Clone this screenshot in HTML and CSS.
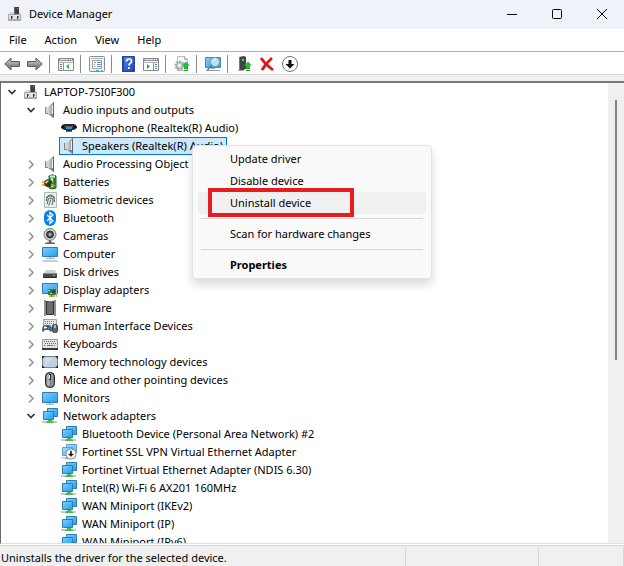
FILE: index.html
```html
<!DOCTYPE html>
<html lang="en">
<head>
<meta charset="utf-8">
<title>Device Manager</title>
<link rel="stylesheet" href="styles.css">
</head>
<body>
<svg class="defs" aria-hidden="true">
  <defs>
    <linearGradient id="g-screen" x1="0" y1="0" x2="1" y2="1"><stop offset="0" stop-color="#7fd0fb"/><stop offset="1" stop-color="#1e9df2"/></linearGradient>
    <linearGradient id="g-cone" x1="0" y1="0" x2="1" y2="0"><stop offset="0" stop-color="#d4d8dc"/><stop offset="1" stop-color="#868c92"/></linearGradient>
    <linearGradient id="g-arrow" x1="0" y1="0" x2="0" y2="1"><stop offset="0" stop-color="#b4b4b4"/><stop offset="1" stop-color="#747474"/></linearGradient>
    <linearGradient id="g-help" x1="0" y1="0" x2="1" y2="1"><stop offset="0" stop-color="#5a86e8"/><stop offset="1" stop-color="#1d3fb0"/></linearGradient>
  </defs>
  <symbol id="i-pc" viewBox="0 0 16 16">
    <path d="M7 1h5v8H7z" fill="#3b3f42"/><path d="M10 2h1v1h-1z" fill="#3cf04a"/><path d="M7 1h1v8H7z" fill="#6a6e70"/>
    <path d="M2 8l1-2h4v3h5V6h1l1 2v1H2z" fill="#d9dadb"/>
    <path d="M1.500 8.500h12v6h-12z" fill="#e1e2e3" stroke="#a2a4a6"/><path d="M2 13h11v2H2z" fill="#a8aaac"/><path d="M4 10h1v3H4zM10 10h1v3h-1z" fill="#333"/><path d="M5 10h1v2H5zM11 10h1v2h-1z" fill="#888"/>
  </symbol>
  <symbol id="i-speaker" viewBox="0 0 16 16">
    <path d="M3 5h3v7H3z" fill="#81878d"/><path d="M4 5h2v6H4z" fill="#cfd6dc"/>
    <path d="M6 5l5-4.500h1v15h-1L6 12z" fill="url(#g-cone)"/>
    <path d="M6 12l5 3.500h1V12H6z" fill="#6f757b" opacity=".6"/>
    <path d="M11 .5h1v15h-1z" fill="#5f646a"/><path d="M10 3h1v9h-1z" fill="#eceef0"/>
  </symbol>
  <symbol id="i-mic" viewBox="0 0 16 16">
    <path d="M1 5l2-1h10l2 1 1 2v1l-3 2h-2v2H5v-2H3L0 8V7z" fill="#272a2e"/>
    <path d="M4 6h8v1H4z" fill="#5b6168"/><path d="M5 7h6v2H5z" fill="#1497ef"/><path d="M1 6h2v2H1zM13 6h2v2h-2z" fill="#111"/><path d="M5 11h6v1H5z" fill="#287bb8"/>
  </symbol>
  <symbol id="i-battery" viewBox="0 0 16 16">
    <path d="M7 2Q10-.5 14 2v12q-3 2-7 0z" fill="#32a53a" stroke="#176b20"/>
    <path d="M8 1.500h5v2H8z" fill="#dde8dd"/><path d="M9 4h2v9H9z" fill="#a6f0a2"/><path d="M12 4h1v10h-1z" fill="#167225"/>
    <path d="M2 7l4-2 4 2 1 3-3 3H5L2 11z" fill="#34362f"/><path d="M3 8l3-2 1 1-3 3z" fill="#e6c641"/>
    <path d="M0 8h3M0 11h3M9 10l4 2" stroke="#c79b22" stroke-width="1.500"/>
  </symbol>
  <symbol id="i-finger" viewBox="0 0 16 16">
    <path d="M2.500 .5h12v15h-12z" fill="#eaf0f0" stroke="#acbcbc"/>
    <g fill="none" stroke="#535b5b"><path d="M4 6q4.500-6 9 0M4.500 9q0-5 4-5t4 6M5 12q1-2 1-4t2.500-2 2.500 2-1 5M6.500 13.500q2-3 2-6"/></g>
  </symbol>
  <symbol id="i-bt" viewBox="0 0 16 16">
    <rect x="2" width="12" height="16" rx="6" fill="#087fee"/><path d="M5 5l6 6-3 2.500v-11L11 5l-6 6" fill="none" stroke="#fff" stroke-width="1.200"/>
  </symbol>
  <symbol id="i-camera" viewBox="0 0 16 16">
    <path d="M3 15q5-3 10 0z" fill="#8d8d8d"/><path d="M7 12h2v3H7z" fill="#555"/><circle cx="8" cy="6.500" r="6" fill="#d3d4d4" stroke="#727474"/><circle cx="8" cy="6.500" r="3.500" fill="#4b4f51" stroke="#272a2c"/><circle cx="8" cy="6.500" r="1.500" fill="#9eb5c0"/><path d="M3 15.500h10" stroke="#666"/>
  </symbol>
  <symbol id="i-computer" viewBox="0 0 16 16">
    <path d="M.5 1.500h15v9H.5z" fill="url(#g-screen)" stroke="#347ba5"/><path d="M7 11h3v2H7z" fill="#b8c2ca"/><path d="M4 12.500h9" stroke="#a5b6c4"/><path d="M1 14.500h14l1 1H0z" fill="#8f9fad"/>
  </symbol>
  <symbol id="i-disk" viewBox="0 0 16 16">
    <path d="M4 6h9l2 4H1z" fill="#cfd1d2"/><path d="M1 9h14v5H1z" fill="#45494c"/><path d="M1 9h14v1H1z" fill="#8c9092"/><path d="M11 11h2v1h-2z" fill="#4be85c"/><path d="M2 13h12v1H2z" fill="#25292b"/>
  </symbol>
  <symbol id="i-display" viewBox="0 0 16 16">
    <path d="M.5 1.500h15v10H.5z" fill="url(#g-screen)" stroke="#347ba5"/><path d="M6 7h8v6H6z" fill="#2a8247"/><path d="M6 8h2v1H6zM8 11h2v1H8z" fill="#a2d8a2"/><path d="M10 8h3v3h-3z" fill="#244d37"/><path d="M14 5h1v10h-1z" fill="#a7b0af"/><path d="M7 13h6v2H7z" fill="#efa51e"/><path d="M9 13h1v2H9z" fill="#b56b00"/>
  </symbol>
  <symbol id="i-chip" viewBox="0 0 16 16">
    <path d="M3 .5v15M13 .5v15" stroke="#222" stroke-width="2" stroke-dasharray="1 1"/><path d="M4.500 1.500h2q1.500 1.500 3 0h2v13h-7z" fill="#686e71" stroke="#2d3133"/>
  </symbol>
  <symbol id="i-hid" viewBox="0 0 16 16">
    <path d="M1.500 1.500h13v8h-13z" fill="#e4e6e8" stroke="#9da3a8"/><path d="M3 3.500h10M3 5.500h10" stroke="#777f86" stroke-dasharray="1 1"/>
    <path d="M0 13q0-6 3-6h4q3 0 3 6-1 2-3-1H3q-2 3-3 1z" fill="#4b5f70"/><path d="M3 8v3M2 9.500h3" stroke="#fff"/><path d="M7 8h1v1H7z" fill="#e33"/><path d="M6 10h1v1H6z" fill="#34b6ff"/><rect x="10.500" y="6.500" width="5" height="8" rx="2" fill="#606870" stroke="#30363c"/><path d="M13 7v3" stroke="#fff"/>
  </symbol>
  <symbol id="i-keyboard" viewBox="0 0 16 16">
    <path d="M.5 3.500h15v9H.5z" fill="#e2e5e8" stroke="#969da3"/><path d="M2 5.500h12M3 7.500h11M2 9.500h2m8 0h2" stroke="#626b73" stroke-dasharray="1 1"/><path d="M5 9.500h6" stroke="#737a80"/><path d="M0 12h16v2H0z" fill="#33383c"/>
  </symbol>
  <symbol id="i-memory" viewBox="0 0 16 16">
    <rect x=".5" y="2.500" width="15" height="11" rx="1" fill="#bdd1df" stroke="#7b868e"/><path d="M0 2h3L0 5zM16 2v3l-3-3zM0 14v-3l3 3zM16 14h-3l3-3z" fill="#22272a"/><path d="M3 4h9L3 12z" fill="#cbdce8"/>
  </symbol>
  <symbol id="i-mouse" viewBox="0 0 16 16">
    <rect x="3.500" y=".5" width="9" height="15" rx="4" fill="#757b80" stroke="#24282b"/><rect x="5" y="2" width="3" height="12" rx="1.500" fill="#aab2b8"/><rect x="9" y="2" width="2" height="12" rx="1" fill="#8e969c"/><path d="M7 2h2v6H7z" fill="#202427"/><path d="M7 3h1v4H7z" fill="#e6f2fa"/>
  </symbol>
  <symbol id="i-monitor" viewBox="0 0 16 16">
    <path d="M.5 2.500h15v10H.5z" fill="url(#g-screen)" stroke="#347ba5"/><path d="M7 13h2v1H7z" fill="#9ab"/><path d="M4 14h8v1H4z" fill="#a8b7c2"/>
  </symbol>
  <symbol id="i-net" viewBox="0 0 16 16">
    <path d="M5.500 .5h10v8h-10z" fill="url(#g-screen)" stroke="#2f7fae"/><path d="M1.500 3.500h10v8h-10z" fill="url(#g-screen)" stroke="#2f7fae"/><path d="M0 13h15v2H0z" fill="#c9cdca"/><path d="M6 12h4v1l2 1v1H4v-1l2-1z" fill="#4bb853"/>
  </symbol>
  <symbol id="i-net-off" viewBox="0 0 16 16">
    <use href="#i-net" opacity=".75"/><circle cx="10" cy="10" r="5" fill="#fff" stroke="#888"/><path d="M9.500 7h1v3h2L10 12.500 7.500 10h2z" fill="#111" stroke="#111" stroke-width=".5"/>
  </symbol>
  <symbol id="i-back" viewBox="0 0 16 16">
    <path d="M.7 8L7 2v3.500h8.500v5H7V14z" fill="url(#g-arrow)" stroke="#5f5f5f"/><path d="M3 8l3-3v2h8" fill="none" stroke="#b9b9b9"/>
  </symbol>
  <symbol id="i-pane" viewBox="0 0 16 16">
    <path d="M.5 2.500h15v12H.5z" fill="#f3f4f5" stroke="#85898c"/><path d="M1 3h14v2H1z" fill="#8b96a1"/><path d="M2 3.500h8" stroke="#d9e2e9"/><path d="M11 3h1v1h-1zM13 3h1v1h-1z" fill="#fff"/><path d="M1 6.500h14" stroke="#aab0b5"/>
  </symbol>
  <symbol id="i-tree" viewBox="0 0 16 16">
    <use href="#i-pane"/><path d="M5.500 7v8" stroke="#92979b"/><path d="M2 8.500h2m-2 2h2m-2 2h2" stroke="#69829a"/><path d="M6 7h9v7H6z" fill="#fff"/><path d="M11 8v5L8 10.500z" fill="#3caa35"/>
  </symbol>
  <symbol id="i-action" viewBox="0 0 16 16">
    <use href="#i-pane"/><path d="M10.500 7v8" stroke="#92979b"/><path d="M12 8.500h2m-2 2h2m-2 2h2" stroke="#69829a"/><path d="M1 7h9v7H1z" fill="#fff"/><path d="M4 8v5l3-2.500z" fill="#3caa35"/>
  </symbol>
  <symbol id="i-props" viewBox="0 0 16 16">
    <rect x=".5" y=".5" width="15" height="15" rx="1" fill="#f0f2f4" stroke="#888e93"/><path d="M2 2.500h12" stroke="#a6b4bf"/><path d="M3.500 4.500h9v8h-9z" fill="#fff" stroke="#9ba9b4"/><path d="M5 6.500h2m1 0h4m-7 2h1m2 0h4m-7 2h1m2 0h4" stroke="#7993a8"/><path d="M7 14h3v1H7z" fill="#27b5ea"/><path d="M12 14h2v1h-2z" fill="#aaa"/>
  </symbol>
  <symbol id="i-help" viewBox="0 0 16 16">
    <path d="M2.500 .5h12v15h-12z" fill="url(#g-help)" stroke="#234197"/><path d="M2 0h2v16H2z" fill="#24449d"/><path d="M6.500 5.500q0-2.500 2.500-2.500t2.500 2.200q0 1.500-1.500 2.300-1 .7-1 2M9 11v2" fill="none" stroke="#fff" stroke-width="1.700"/>
  </symbol>
  <symbol id="i-scan" viewBox="0 0 16 16">
    <path d="M3.500 .5h7l3 3v11h-10z" fill="#fafafa" stroke="#bdbdbd"/><path d="M10.500 .5v3h3" fill="none" stroke="#aaa"/><circle cx="5.500" cy="9.500" r="4" fill="none" stroke="#a3a8ac" stroke-width="2" stroke-dasharray="2 1"/><circle cx="5.500" cy="9.500" r="3" fill="#d3d8dc" stroke="#969ca1"/><circle cx="5.500" cy="9.500" r="1.200" fill="#fff"/><use href="#i-up"/>
  </symbol>
  <symbol id="i-up" viewBox="0 0 16 16">
    <path d="M12 5.500l4 4h-2V12h-4V9.500H8z" fill="#25bf34"/><path d="M10 12.500h4m-4 2h4" stroke="#1a9b29"/>
  </symbol>
  <symbol id="i-find" viewBox="0 0 16 16">
    <path d="M.5 1.500h15v10H.5z" fill="url(#g-screen)" stroke="#4d87a8"/><path d="M6 12h4v1H6z" fill="#9ab"/><path d="M1 14.500h14" stroke="#8ba0ae"/><circle cx="10" cy="6" r="4.500" fill="#b9e5fc" stroke="#8b9aa3"/><path d="M7 9l-4.500 5" stroke="#66767f" stroke-width="1.500"/><path d="M8 5q1-2 3-2" fill="none" stroke="#fff"/>
  </symbol>
  <symbol id="i-update" viewBox="0 0 16 16">
    <path d="M3 1l5-1 2 1v12l-3 1H3z" fill="#3f4446"/><path d="M3 1h1v13H3z" fill="#777"/><path d="M6 3h2v2H6z" fill="#43e24d"/><path d="M2 14.500h6" stroke="#aaa"/><use href="#i-up"/>
  </symbol>
  <symbol id="i-remove" viewBox="0 0 16 16">
    <path d="M2 2q4 6 12 12M13 2Q7 7 3 14" fill="none" stroke="#d9141c" stroke-width="2.800"/>
  </symbol>
  <symbol id="i-disable" viewBox="0 0 16 16">
    <circle cx="8" cy="8" r="7.500" fill="#fff" stroke="#777"/><path d="M6.500 4h3v4h3L8 12.500 3.500 8h3z" fill="#111"/>
  </symbol>
  <symbol id="i-open" viewBox="0 0 10 10"><path d="M1.500 3L5 6.500 8.500 3" fill="none" stroke="#333" stroke-width="1.700"/></symbol>
  <symbol id="i-closed" viewBox="0 0 10 10"><path d="M3 1.500L7 5.500 3 9.500" fill="none" stroke="#999" stroke-width="1.700"/></symbol>
</svg>

<div class="window">
  <header class="titlebar">
    <svg class="icon"><use href="#i-pc"/></svg>
    <h1 class="title">Device Manager</h1>
    <button class="caption" aria-label="Minimize"><svg class="glyph" viewBox="0 0 10 10"><path d="M0 5.500h10"/></svg></button>
    <button class="caption" aria-label="Maximize"><svg class="glyph" viewBox="0 0 10 10"><rect x=".5" y=".5" width="9" height="9" rx="1"/></svg></button>
    <button class="caption" aria-label="Close"><svg class="glyph" viewBox="0 0 10 10"><path d="M0 0l10 10M10 0L0 10"/></svg></button>
  </header>

  <nav class="menubar">
    <button class="menu">File</button>
    <button class="menu">Action</button>
    <button class="menu">View</button>
    <button class="menu">Help</button>
  </nav>

  <div class="toolbar" role="toolbar">
    <button class="tool" aria-label="Back"><svg class="icon"><use href="#i-back"/></svg></button>
    <button class="tool" aria-label="Forward"><svg class="icon flip"><use href="#i-back"/></svg></button>
    <span class="divider"></span>
    <button class="tool" aria-label="Show or hide console tree"><svg class="icon"><use href="#i-tree"/></svg></button>
    <span class="divider"></span>
    <button class="tool" aria-label="Properties"><svg class="icon"><use href="#i-props"/></svg></button>
    <span class="divider"></span>
    <button class="tool" aria-label="Help"><svg class="icon"><use href="#i-help"/></svg></button>
    <button class="tool" aria-label="Show or hide action pane"><svg class="icon"><use href="#i-action"/></svg></button>
    <span class="divider"></span>
    <button class="tool" aria-label="Update driver"><svg class="icon"><use href="#i-scan"/></svg></button>
    <span class="divider"></span>
    <button class="tool" aria-label="Scan for hardware changes"><svg class="icon"><use href="#i-find"/></svg></button>
    <span class="divider"></span>
    <button class="tool" aria-label="Update device"><svg class="icon"><use href="#i-update"/></svg></button>
    <button class="tool" aria-label="Uninstall device"><svg class="icon"><use href="#i-remove"/></svg></button>
    <button class="tool" aria-label="Disable device"><svg class="icon"><use href="#i-disable"/></svg></button>
  </div>

  <main class="pane">
    <ul class="tree">
      <li>
        <div class="row"><button class="twisty" aria-label="Collapse"><svg class="chevron"><use href="#i-open"/></svg></button><svg class="icon"><use href="#i-pc"/></svg><span class="label">LAPTOP-7SI0F300</span></div>
        <ul class="branch">
          <li>
            <div class="row"><button class="twisty" aria-label="Collapse"><svg class="chevron"><use href="#i-open"/></svg></button><svg class="icon"><use href="#i-speaker"/></svg><span class="label">Audio inputs and outputs</span></div>
            <ul class="leaves">
              <li><div class="row leaf"><svg class="icon"><use href="#i-mic"/></svg><span class="label">Microphone (Realtek(R) Audio)</span></div></li>
              <li class="anchor">
                <div class="row leaf selected"><svg class="icon"><use href="#i-speaker"/></svg><span class="label">Speakers (Realtek(R) Audio)</span></div>
                <div class="context" role="menu">
                  <button class="command" role="menuitem">Update driver</button>
                  <button class="command" role="menuitem">Disable device</button>
                  <button class="command current" role="menuitem">Uninstall device</button>
                  <hr class="rule">
                  <button class="command" role="menuitem">Scan for hardware changes</button>
                  <hr class="rule">
                  <button class="command default" role="menuitem">Properties</button>
                </div>
              </li>
            </ul>
          </li>
          <li><div class="row"><button class="twisty" aria-label="Expand"><svg class="chevron"><use href="#i-closed"/></svg></button><svg class="icon"><use href="#i-speaker"/></svg><span class="label">Audio Processing Object</span></div></li>
          <li><div class="row"><button class="twisty" aria-label="Expand"><svg class="chevron"><use href="#i-closed"/></svg></button><svg class="icon"><use href="#i-battery"/></svg><span class="label">Batteries</span></div></li>
          <li><div class="row"><button class="twisty" aria-label="Expand"><svg class="chevron"><use href="#i-closed"/></svg></button><svg class="icon"><use href="#i-finger"/></svg><span class="label">Biometric devices</span></div></li>
          <li><div class="row"><button class="twisty" aria-label="Expand"><svg class="chevron"><use href="#i-closed"/></svg></button><svg class="icon"><use href="#i-bt"/></svg><span class="label">Bluetooth</span></div></li>
          <li><div class="row"><button class="twisty" aria-label="Expand"><svg class="chevron"><use href="#i-closed"/></svg></button><svg class="icon"><use href="#i-camera"/></svg><span class="label">Cameras</span></div></li>
          <li><div class="row"><button class="twisty" aria-label="Expand"><svg class="chevron"><use href="#i-closed"/></svg></button><svg class="icon"><use href="#i-computer"/></svg><span class="label">Computer</span></div></li>
          <li><div class="row"><button class="twisty" aria-label="Expand"><svg class="chevron"><use href="#i-closed"/></svg></button><svg class="icon"><use href="#i-disk"/></svg><span class="label">Disk drives</span></div></li>
          <li><div class="row"><button class="twisty" aria-label="Expand"><svg class="chevron"><use href="#i-closed"/></svg></button><svg class="icon"><use href="#i-display"/></svg><span class="label">Display adapters</span></div></li>
          <li><div class="row"><button class="twisty" aria-label="Expand"><svg class="chevron"><use href="#i-closed"/></svg></button><svg class="icon"><use href="#i-chip"/></svg><span class="label">Firmware</span></div></li>
          <li><div class="row"><button class="twisty" aria-label="Expand"><svg class="chevron"><use href="#i-closed"/></svg></button><svg class="icon"><use href="#i-hid"/></svg><span class="label">Human Interface Devices</span></div></li>
          <li><div class="row"><button class="twisty" aria-label="Expand"><svg class="chevron"><use href="#i-closed"/></svg></button><svg class="icon"><use href="#i-keyboard"/></svg><span class="label">Keyboards</span></div></li>
          <li><div class="row"><button class="twisty" aria-label="Expand"><svg class="chevron"><use href="#i-closed"/></svg></button><svg class="icon"><use href="#i-memory"/></svg><span class="label">Memory technology devices</span></div></li>
          <li><div class="row"><button class="twisty" aria-label="Expand"><svg class="chevron"><use href="#i-closed"/></svg></button><svg class="icon"><use href="#i-mouse"/></svg><span class="label">Mice and other pointing devices</span></div></li>
          <li><div class="row"><button class="twisty" aria-label="Expand"><svg class="chevron"><use href="#i-closed"/></svg></button><svg class="icon"><use href="#i-monitor"/></svg><span class="label">Monitors</span></div></li>
          <li>
            <div class="row"><button class="twisty" aria-label="Collapse"><svg class="chevron"><use href="#i-open"/></svg></button><svg class="icon"><use href="#i-net"/></svg><span class="label">Network adapters</span></div>
            <ul class="leaves">
              <li><div class="row leaf"><svg class="icon"><use href="#i-net"/></svg><span class="label">Bluetooth Device (Personal Area Network) #2</span></div></li>
              <li><div class="row leaf"><svg class="icon"><use href="#i-net-off"/></svg><span class="label">Fortinet SSL VPN Virtual Ethernet Adapter</span></div></li>
              <li><div class="row leaf"><svg class="icon"><use href="#i-net"/></svg><span class="label">Fortinet Virtual Ethernet Adapter (NDIS 6.30)</span></div></li>
              <li><div class="row leaf"><svg class="icon"><use href="#i-net"/></svg><span class="label">Intel(R) Wi-Fi 6 AX201 160MHz</span></div></li>
              <li><div class="row leaf"><svg class="icon"><use href="#i-net"/></svg><span class="label">WAN Miniport (IKEv2)</span></div></li>
              <li><div class="row leaf"><svg class="icon"><use href="#i-net"/></svg><span class="label">WAN Miniport (IP)</span></div></li>
              <li><div class="row leaf"><svg class="icon"><use href="#i-net"/></svg><span class="label">WAN Miniport (IPv6)</span></div></li>
            </ul>
          </li>
        </ul>
      </li>
    </ul>
    <div class="scrollbar"><div class="thumb"></div></div>
  </main>

  <footer class="status">
    <p class="message">Uninstalls the driver for the selected device.</p>
    <span class="cell wide"></span>
    <span class="cell"></span>
  </footer>
</div>
</body>
</html>
```

FILE: styles.css
```css
*,
*::before,
*::after {
  box-sizing: border-box;
}

body {
  margin: 0;
  font: 11px/18px "Noto Sans", "Open Sans", sans-serif;
  color: #000;
  background: #fff;
}

button {
  margin: 0;
  padding: 0;
  border: 0;
  background: none;
  font: inherit;
  color: inherit;
}

ul {
  margin: 0;
  padding: 0;
  list-style: none;
}

.defs {
  position: absolute;
  width: 0;
  height: 0;
}

.icon {
  display: block;
  flex: none;
  width: 16px;
  height: 16px;
}

.flip {
  transform: scaleX(-1);
}

.window {
  display: flex;
  flex-direction: column;
  height: 100vh;
  background: #f0f0f0;
}

.titlebar {
  display: flex;
  flex: none;
  align-items: center;
  height: 29px;
  padding: 0 0 2px 7px;
  background: #eff2f9;
}

.title {
  flex: 1;
  margin: 0 0 0 6px;
  font-size: 11px;
  font-weight: 400;
}

.caption {
  display: flex;
  align-items: center;
  justify-content: center;
  width: 45px;
  height: 27px;
}

.glyph {
  width: 10px;
  height: 10px;
  overflow: visible;
  fill: none;
  stroke: #000;
}

.menubar {
  display: flex;
  flex: none;
  height: 23px;
  background: #fff;
  border-bottom: 1px solid #b0b0b5;
}

.menu {
  padding: 0 9px;
}

.toolbar {
  display: flex;
  flex: none;
  align-items: center;
  height: 23px;
  padding-top: 2px;
  background: #fff;
  border-bottom: 1px solid #d9d9d9;
}

.tool {
  display: flex;
  justify-content: center;
  width: 23px;
}

.divider {
  width: 1px;
  height: 18px;
  margin: 0 4px 0 3px;
  background: #8b8b8b;
}

.pane {
  display: flex;
  flex: 1;
  min-height: 0;
  margin-top: 6px;
  overflow: hidden;
  background: #fff;
  border-top: 2px solid #777;
  border-left: 1px solid #696969;
  border-bottom: 1px solid #e0e0e0;
}

.tree {
  flex: 1;
  min-width: 0;
  padding-left: 2px;
}

.branch {
  padding-left: 19px;
}

.leaves {
  padding-left: 37px;
}

.row {
  display: flex;
  align-items: center;
  width: max-content;
  height: 18px;
}

.leaf {
  padding: 0 4px 0 2px;
}

.twisty {
  display: flex;
  align-items: center;
  justify-content: center;
  width: 17px;
  height: 18px;
  margin-right: 3px;
}

.chevron {
  width: 10px;
  height: 10px;
}

.label {
  padding-left: 5px;
  white-space: nowrap;
}

.anchor {
  position: relative;
}

.selected {
  background: #cce8ff;
  outline: 1px solid #0078d4;
  outline-offset: -1px;
}

.scrollbar {
  display: flex;
  justify-content: center;
  flex: none;
  width: 16px;
  padding-top: 17px;
  background: #f0f0f0;
}

.thumb {
  width: 2px;
  height: 260px;
  background: #858585;
}

.context {
  position: absolute;
  z-index: 1;
  top: 8px;
  left: 133px;
  width: 240px;
  padding: 2px 5px;
  background: #f9f9f9;
  border: 1px solid #e2e2e2;
  border-radius: 4px;
  box-shadow: 0 6px 10px rgba(0, 0, 0, 0.14);
}

.command {
  display: block;
  position: relative;
  width: 100%;
  height: 22px;
  padding-left: 32px;
  border-radius: 4px;
  text-align: left;
}

.current {
  background: #f0f0f0;
}

.current::after {
  content: "";
  position: absolute;
  top: -4px;
  left: 10px;
  width: 146px;
  height: 29px;
  border: 4px solid #e71c1e;
}

.default {
  font-weight: 700;
}

.rule {
  height: 1px;
  margin: 4px 3px;
  border: 0;
  background: #d7d7d7;
}

.status {
  display: flex;
  flex: none;
  height: 21px;
  margin-top: 1px;
  box-shadow: 0 -1px #fff;
  border-top: 1px solid #d7d7d7;
}

.message {
  flex: 1;
  margin: 1px 0 0;
  padding: 2px 0 0 1px;
  border-right: 1px solid #d7d7d7;
  white-space: nowrap;
}

.cell {
  width: 85px;
  margin-top: 1px;
  border-right: 1px solid #d7d7d7;
}

.wide {
  width: 133px;
}
```
